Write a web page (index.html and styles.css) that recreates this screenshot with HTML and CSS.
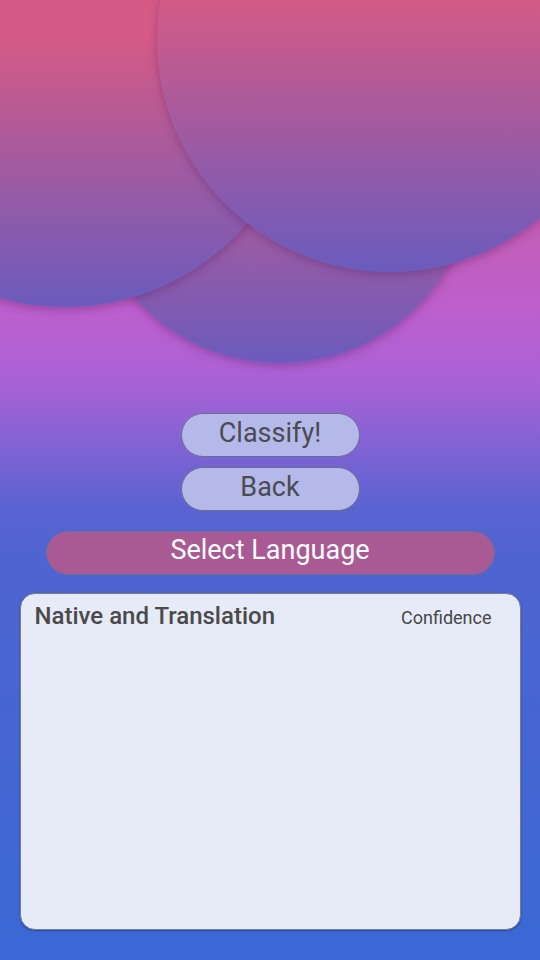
FILE: index.html
```html
<!DOCTYPE html>
<html>
<head>
<meta charset="utf-8">
<link rel="stylesheet" href="styles.css">
</head>
<body>
<div class="screen">
  <div class="hero">
    <div class="bubble bubble-mid"></div>
    <div class="bubble bubble-left"></div>
    <div class="bubble bubble-right"></div>
  </div>
  <div class="actions">
    <button class="pill">Classify!</button>
    <button class="pill">Back</button>
    <button class="select">Select Language</button>
  </div>
  <div class="card">
    <div class="card-head">
      <span class="card-title">Native and Translation</span>
      <span class="card-sub">Confidence</span>
    </div>
  </div>
</div>
</body>
</html>
```
FILE: styles.css
```css
* { box-sizing: border-box; }
html, body { margin: 0; padding: 0; }
body {
  font-family: Roboto, "Noto Sans", sans-serif;
}
.screen {
  width: 540px;
  height: 960px;
  overflow: hidden;
  background: linear-gradient(to bottom, #d55a86 0%, #c95b9f 15%, #bc5fcf 33%, #a862d6 40%, #5a63d2 53%, #4f64d0 58%, #3a68d6 100%);
  display: flex;
  flex-direction: column;
  align-items: center;
}
.hero {
  position: relative;
  width: 540px;
  height: 413px;
  flex: none;
}
.bubble {
  position: absolute;
  border-radius: 50%;
  box-shadow: 0 3px 8px rgba(80, 30, 90, 0.35);
}
.bubble-mid {
  left: 85px;
  top: -27px;
  width: 390px;
  height: 390px;
  background: linear-gradient(to bottom, #d55a86 30%, #6a5bbd 100%);
}
.bubble-left {
  left: -175px;
  top: -173px;
  width: 480px;
  height: 480px;
  background: linear-gradient(to bottom, #d55a86 44%, #6a5bbd 100%);
}
.bubble-right {
  left: 157px;
  top: -194px;
  width: 466px;
  height: 466px;
  background: linear-gradient(to bottom, #d55a86 41%, #6a5bbd 100%);
}
.actions {
  display: flex;
  flex-direction: column;
  align-items: center;
  gap: 10px;
  width: 100%;
}
.pill {
  width: 179px;
  height: 44px;
  border-radius: 22px;
  border: 1.5px solid #6c6f8c;
  background: #b4b9e9;
  color: #4b4b52;
  font-family: Roboto, sans-serif;
  font-size: 27px;
  padding: 0 0 4px 0;
  line-height: 1;
}
.select {
  margin-top: 10px;
  width: 449px;
  height: 44px;
  border-radius: 22px;
  border: 1.5px solid #6c6f9a;
  background: #a95a95;
  color: #ffffff;
  font-family: Roboto, sans-serif;
  font-size: 27px;
  padding: 0 0 5px 0;
  line-height: 1;
}
.card {
  margin-top: 18px;
  width: 501px;
  height: 337px;
  background: #e6ebf7;
  border: 1.5px solid #787c8c;
  border-radius: 15px;
  box-shadow: 0 1px 2px rgba(0,0,0,0.3);
  padding: 8px 28px 0 14px;
}
.card-head {
  display: flex;
  justify-content: space-between;
  align-items: baseline;
}
.card-title {
  font-size: 24px;
  font-weight: 500;
  color: #4a4a4a;
}
.card-sub {
  font-size: 18px;
  color: #474747;
}
```
